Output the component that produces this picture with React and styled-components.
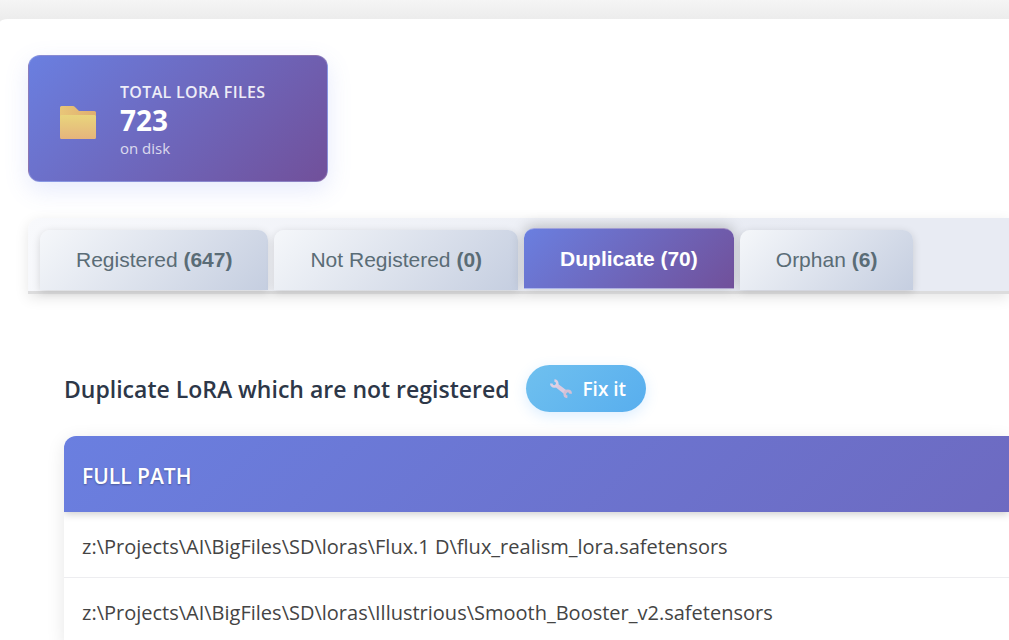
import React from 'react';
import styled, { createGlobalStyle } from 'styled-components';

const accent = 'linear-gradient(135deg, #6a7fe0 0%, #71509a 100%)';

const GlobalStyle = createGlobalStyle`
  *, *::before, *::after { box-sizing: border-box; }
  body {
    margin: 0;
    background: #eeeeee;
    color: #2d3748;
    font-family: "Open Sans", "Noto Sans", sans-serif;
  }
`;

const Page = styled.div`
  padding-top: 19px;
  background: linear-gradient(180deg, #f5f5f5 0, #ececec 19px);
`;

const Panel = styled.main`
  min-height: calc(100vh - 19px);
  padding: 36px 0 0 28px;
  border-top-left-radius: 8px 3px;
  background: #ffffff;
`;

const StatCard = styled.section`
  display: flex;
  align-items: center;
  gap: 20px;
  width: 300px;
  padding: 26px 31px 23px;
  border: 1px solid rgba(255, 255, 255, 0.2);
  border-radius: 12px;
  background: ${accent};
  box-shadow: 0 8px 24px rgba(102, 126, 234, 0.16);
  color: #ffffff;
`;

const StatText = styled.div`
  display: flex;
  flex-direction: column;
`;

const StatLabel = styled.span`
  font-size: 16px;
  line-height: 20px;
  font-weight: 600;
  letter-spacing: 0.02em;
  opacity: 0.88;
`;

const StatValue = styled.strong`
  font-size: 28px;
  line-height: 36px;
  font-weight: 700;
`;

const StatNote = styled.span`
  font-size: 15px;
  line-height: 20px;
  opacity: 0.75;
`;

const TabBar = styled.div`
  display: flex;
  gap: 6px;
  margin-top: 36px;
  padding: 12px 12px 0;
  border-bottom: 3px solid #dcdcdd;
  border-top-left-radius: 12px;
  background: linear-gradient(135deg, #f8f9fc 0%, #e8ebf3 75%);
  box-shadow: 0 4px 14px rgba(0, 0, 0, 0.1);
`;

const Tab = styled.button`
  position: relative;
  height: 60px;
  padding: 0 36px;
  border: 0;
  border-radius: 10px 10px 0 0;
  background: linear-gradient(135deg, #f5f7fa 0%, #c5cee0 100%);
  box-shadow: 0 2px 8px rgba(0, 0, 0, 0.14);
  color: #5a6c76;
  font-family: "Liberation Sans", Arial, sans-serif;
  font-size: 21px;
  white-space: nowrap;

  &[aria-selected='true'] {
    top: -2px;
    height: 61px;
    border-top: 1px solid rgba(255, 255, 255, 0.35);
    border-bottom: 1px solid rgba(255, 255, 255, 0.45);
    background: ${accent};
    box-shadow: 0 -2px 14px rgba(0, 0, 0, 0.22);
    color: #ffffff;
    font-weight: 700;
  }
`;

const Content = styled.section`
  padding: 71px 0 0 36px;
`;

const Heading = styled.div`
  display: flex;
  align-items: center;
  gap: 16px;
  margin-bottom: 24px;
`;

const Title = styled.h2`
  margin: 0;
  font-size: 23px;
  line-height: 32px;
  font-weight: 600;
  white-space: nowrap;
`;

const FixButton = styled.button`
  display: flex;
  align-items: center;
  gap: 11px;
  height: 47px;
  padding: 0 20px 0 24px;
  border: 0;
  border-radius: 24px;
  background: linear-gradient(135deg, #6fc0ef 0%, #58aeee 100%);
  box-shadow: 0 4px 14px rgba(79, 172, 254, 0.2);
  color: #ffffff;
  font-family: inherit;
  font-size: 19px;
  font-weight: 600;
  white-space: nowrap;
`;

const TableFrame = styled.div`
  overflow: hidden;
  border-top-left-radius: 12px;
`;

const TableShadow = styled.div`
  border-top-left-radius: 12px;
  box-shadow: 0 4px 18px rgba(0, 0, 0, 0.1);
`;

const Table = styled.table`
  width: 100%;
  border-collapse: separate;
  border-spacing: 0;
  background: #ffffff;
  text-align: left;
`;

const HeadCell = styled.th`
  height: 76px;
  padding: 3px 18px 0;
  background: linear-gradient(135deg, #6a7fe0 0%, #71509a 225%);
  box-shadow: 0 2px 8px rgba(0, 0, 0, 0.2);
  color: #ffffff;
  font-size: 21px;
  line-height: 28px;
  font-weight: 600;
  text-shadow: 0 1px 2px rgba(0, 0, 0, 0.3);
`;

const Cell = styled.td`
  height: 66px;
  padding: 5px 18px 0;
  border-bottom: 1px solid #ededf0;
  color: #444444;
  font-size: 20px;
  line-height: 28px;
  white-space: nowrap;
`;

const FolderIcon = () => (
  <svg width="40" height="40" viewBox="0 -2 40 40" aria-hidden="true">
    <defs>
      <linearGradient id="folderFront" x1="0" y1="0" x2="0" y2="1">
        <stop offset="0" stopColor="#e9d57c" />
        <stop offset="1" stopColor="#e5b47c" />
      </linearGradient>
      <linearGradient id="folderBack" x1="0" y1="0" x2="1" y2="0">
        <stop offset="0" stopColor="#e9c678" />
        <stop offset="1" stopColor="#dfae70" />
      </linearGradient>
    </defs>
    <path d="M0 5.5A1.5 1.5 0 0 1 1.5 4H13q1 0 1.700.7L19 9h15.500A1.500 1.500 0 0 1 36 10.500V16H0Z" fill="url(#folderBack)" />
    <path d="M0 14.500A1.500 1.500 0 0 1 1.500 13H34.500A1.500 1.500 0 0 1 36 14.500V35.500A1.500 1.500 0 0 1 34.500 37H1.500A1.500 1.500 0 0 1 0 35.500Z" fill="url(#folderFront)" />
  </svg>
);

const WrenchIcon = () => (
  <svg width="22" height="20" viewBox="0 0 22 20" fill="none" aria-hidden="true">
    <path d="M5.500 5.600 16.500 14" stroke="#dccbe0" strokeWidth="4.200" />
    <path d="M1.300 4.500A3 3 0 1 0 4.400 1.500" stroke="#dfd0e4" strokeWidth="2.600" />
    <path d="M20.700 14.800A3 3 0 1 0 17.400 17.900" stroke="#d3c0d6" strokeWidth="2.600" />
  </svg>
);

const tabs = [
  { name: 'Registered', count: 647 },
  { name: 'Not Registered', count: 0 },
  { name: 'Duplicate', count: 70 },
  { name: 'Orphan', count: 6 },
];

const paths = [
  'z:\\Projects\\AI\\BigFiles\\SD\\loras\\Flux.1 D\\flux_realism_lora.safetensors',
  'z:\\Projects\\AI\\BigFiles\\SD\\loras\\Illustrious\\Smooth_Booster_v2.safetensors',
];

export default function App() {
  return (
    <Page>
      <GlobalStyle />
      <Panel>
        <StatCard>
          <FolderIcon />
          <StatText>
            <StatLabel>TOTAL LORA FILES</StatLabel>
            <StatValue>723</StatValue>
            <StatNote>on disk</StatNote>
          </StatText>
        </StatCard>
        <TabBar role="tablist">
          {tabs.map(({ name, count }) => (
            <Tab key={name} type="button" role="tab" aria-selected={name === 'Duplicate'}>
              {name} <b>({count})</b>
            </Tab>
          ))}
        </TabBar>
        <Content>
          <Heading>
            <Title>Duplicate LoRA which are not registered</Title>
            <FixButton type="button">
              <WrenchIcon />
              Fix it
            </FixButton>
          </Heading>
          <TableShadow>
            <TableFrame>
              <Table>
                <thead>
                  <tr>
                    <HeadCell scope="col">FULL PATH</HeadCell>
                  </tr>
                </thead>
                <tbody>
                  {paths.map((path) => (
                    <tr key={path}>
                      <Cell>{path}</Cell>
                    </tr>
                  ))}
                </tbody>
              </Table>
            </TableFrame>
          </TableShadow>
        </Content>
      </Panel>
    </Page>
  );
}
